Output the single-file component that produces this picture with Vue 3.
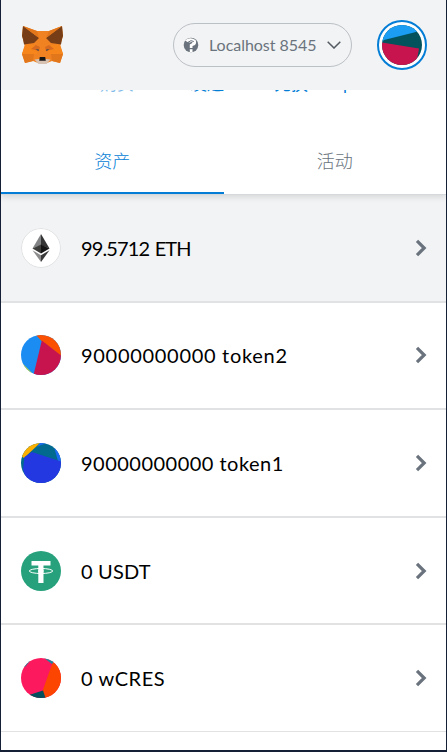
<script setup>
const assets = [
  { id: 'eth', label: '99.5712 ETH' },
  { id: 'token2', label: '90000000000 token2' },
  { id: 'token1', label: '90000000000 token1' },
  { id: 'usdt', label: '0 USDT' },
  { id: 'wcres', label: '0 wCRES' },
]
</script>

<template>
  <div class="wallet">
    <header class="header">
      <svg class="fox" viewBox="0 0 41 40" width="41" height="40">
        <path fill="#f08222" d="M1 1 15 6H27L40 1 41 11 38 21 41 29 38 38 30 36 25 38H16L11 36 3 38 0 29 3 21 0 11Z" />
        <path fill="#e2761b" d="M0 29H12L11 36 3 38ZM41 29H29L30 36 38 38Z" />
        <path fill="#f6851b" d="M3 19 12 20 16 29H0ZM38 19 29 20 25 29H41Z" />
        <path fill="#763d16" d="M1 1 17 13 12 18 2 19.500 1 14 0 11ZM40 1 24 13 29 18 39 19.500 40 14 41 11Z" />
        <path fill="#e2761b" d="M1 1 15 6 17 13ZM40 1 27 6 24 13Z" />
        <path fill="#d86a1f" d="M9 24 14 20 18 22 17 26ZM32 24 27 20 23 22 24 26Z" />
        <path fill="#f08222" d="M12 30 18 28 17 33 12 35ZM29 30 23 28 24 33 29 35Z" />
        <path fill="#4d4a4c" d="M13.500 24 17 24.500 16.500 26.200ZM27.500 24 24 24.500 24.500 26.200Z" />
        <path fill="#d7c1b3" d="M12.500 34.500 17 34H24L28.500 34.500 24.500 39H16.500Z" />
        <path fill="#161616" d="M17.800 32H23.200L23.800 35.700H17.200Z" />
      </svg>
      <div class="network">
        <svg class="help" viewBox="0 0 16 16" width="16" height="16">
          <circle cx="8" cy="8" r="7.300" fill="#6a737d" />
          <path d="M2 3.500Q7-.8 12.500 3Q14 5.500 12 8L9.500 9V11H6.800V7.500L9.300 6V4.700L6.800 5.500 4.500 5Z" fill="#fff" />
          <path d="M6.800 12.200H9.500V15H6.800Z" fill="#fff" />
          <path d="M5 5.300Q8 2.500 10.800 4.500" fill="none" stroke="#6a737d" stroke-width="1" />
        </svg>
        <span class="network-name">Localhost 8545</span>
        <svg class="down" viewBox="0 0 14 8" width="14" height="8"><path d="M.7.7 7 7 13.300.7" fill="none" stroke="#535a61" stroke-width="1.500" /></svg>
      </div>
      <div class="account">
        <svg class="disc" viewBox="0 0 40 40" width="40" height="40">
          <rect width="40" height="40" fill="#03525c" />
          <path d="M0 0H40V5L32 7.500 2 15 0 17Z" fill="#1b9df3" />
          <path d="M0 17.500 37 23.500 34 40H0Z" fill="#c8144e" />
        </svg>
      </div>
    </header>

    <div class="overview">
      <div class="actions">
        <span class="action muted">购买</span>
        <span class="action">发送</span>
        <span class="action">兑换 Swap</span>
      </div>
    </div>

    <nav class="tabs">
      <div class="tab active">资产</div>
      <div class="tab">活动</div>
    </nav>

    <main class="assets">
      <div v-for="asset in assets" :key="asset.id" class="asset" :class="asset.id">
        <svg class="disc" viewBox="0 0 40 40" width="40" height="40">
          <g v-if="asset.id === 'eth'">
            <circle cx="20" cy="20" r="19.500" fill="#fff" stroke="#dfe0e2" />
            <path d="M20 6 11.500 20.500 20 17Z" fill="#828384" />
            <path d="M20 6 28.500 20.500 20 17Z" fill="#343434" />
            <path d="M11.500 20.500 20 16.500V25.500Z" fill="#3c3c3b" />
            <path d="M28.500 20.500 20 16.500V25.500Z" fill="#141414" />
            <path d="M11.500 22.300 20 27.300V34Z" fill="#8c8c8c" />
            <path d="M28.500 22.300 20 27.300V34Z" fill="#393939" />
          </g>
          <g v-else-if="asset.id === 'token2'">
            <rect width="40" height="40" fill="#1a8cf2" />
            <path d="M15 0H40V21L20.500 6Z" fill="#fa5000" />
            <path d="M20.800 5.500 40 20.500V40H12.500Z" fill="#c8144e" />
            <path d="M2 29 11 38 8 40 0 31Z" fill="#c8dc36" />
          </g>
          <g v-else-if="asset.id === 'token1'">
            <rect width="40" height="40" fill="#016a8e" />
            <path d="M0 0H19L3 15 0 13Z" fill="#fbb000" />
            <path d="M19 0H27L20 2 16 4Z" fill="#1b6cf2" />
            <path d="M33 4 37 18 40 19V5Z" fill="#1b6cf2" />
            <path d="M3.500 14 11 9 40 18.500V40H6L2 26Z" fill="#2338e1" />
          </g>
          <g v-else-if="asset.id === 'usdt'">
            <rect width="40" height="40" fill="#26a17b" />
            <path d="M10.500 10H29.500V14.500H22.500V32H17.300V14.500H10.500Z" fill="#fff" />
            <ellipse cx="20" cy="20" rx="11.700" ry="2.500" fill="none" stroke="#fff" stroke-width="1" />
            <path d="M17.300 18.800H22.500V21.600H17.300Z" fill="#fff" />
          </g>
          <g v-else>
            <rect width="40" height="40" fill="#fc195e" />
            <path d="M31.500 5 40 0V40H24L21.500 33Z" fill="#fb4500" />
            <path d="M23 0 31 6 34 2Z" fill="#158b9c" />
            <path d="M8 37 22 32.500 24.500 40H8Z" fill="#03505c" />
            <path d="M4 9 9 3 7 2 2 8Z" fill="#158b9c" />
          </g>
        </svg>
        <span class="amount">{{ asset.label }}</span>
        <svg class="chevron" viewBox="0 0 12 18" width="12" height="18"><path d="M2 1.800 9.200 9 2 16.200" fill="none" stroke="#6a737d" stroke-width="3.200" /></svg>
      </div>
    </main>
  </div>
</template>

<style>
body {
  overflow: hidden;
}
</style>

<style scoped>
.wallet {
  box-sizing: border-box;
  width: 447px;
  height: 752px;
  overflow: hidden;
  display: flex;
  flex-direction: column;
  border: solid #152036;
  border-width: 0 1px 2px;
  background: #fff;
  font-family: Lato, "Noto Sans CJK SC", sans-serif;
}
.header {
  box-sizing: border-box;
  flex: none;
  height: 90px;
  padding: 0 19px 0 21px;
  display: flex;
  align-items: center;
  background: #f2f3f4;
}
.network {
  box-sizing: border-box;
  width: 179px;
  height: 44px;
  margin: 0 25px 0 auto;
  padding: 0 10px 0 9px;
  display: flex;
  align-items: center;
  border: 1px solid #bbc0c5;
  border-radius: 22px;
  color: #6a737d;
}
.network-name {
  margin-left: 10px;
  font-size: 16px;
  line-height: 20px;
  letter-spacing: -0.03px;
  white-space: nowrap;
}
.down {
  margin-left: auto;
}
.account {
  box-sizing: border-box;
  width: 50px;
  height: 50px;
  padding: 3px;
  border: 2px solid #037dd6;
  border-radius: 50%;
  background: #fff;
}
.disc {
  display: block;
  flex: none;
  border-radius: 50%;
}
.overview {
  flex: none;
  height: 36px;
  overflow: hidden;
}
.actions {
  margin-top: -16px;
  padding-left: 99px;
  display: flex;
  color: #037dd6;
  font-size: 17px;
  line-height: 20px;
  white-space: nowrap;
}
.action {
  width: 90px;
}
.action + .action {
  width: 84px;
}
.muted {
  opacity: 0.5;
}
.tabs {
  flex: none;
  height: 68px;
  display: flex;
  position: relative;
  box-shadow: 0 1px 0 #d6d9dc, 0 3px 6px rgba(0, 0, 0, 0.12);
  clip-path: inset(0 0 -10px);
}
.tab {
  box-sizing: border-box;
  flex: 1;
  padding-top: 20px;
  text-align: center;
  font-size: 18px;
  line-height: 28px;
  color: #6a737d;
  font-weight: 300;
  font-family: "Noto Sans CJK SC", sans-serif;
}
.active {
  color: #037dd6;
  border-bottom: 2px solid #037dd6;
}
.asset {
  box-sizing: border-box;
  height: 107.6px;
  padding: 0 19px 0 20px;
  display: flex;
  align-items: center;
  border-top: 1px solid #e0e2e4;
  border-bottom: 1px solid #e0e2e4;
}
.eth {
  background: #f2f3f4;
}
.amount {
  margin-left: 20px;
  font-size: 20px;
  line-height: 28px;
  color: #000;
  letter-spacing: 0.7px;
  white-space: nowrap;
}
.eth .amount {
  letter-spacing: -0.85px;
  word-spacing: 1px;
}
.token1 .amount {
  letter-spacing: 0.48px;
}
.usdt .amount {
  letter-spacing: 0.2px;
}
.wcres .amount {
  letter-spacing: 0.55px;
}
.chevron {
  margin-left: auto;
}
</style>
